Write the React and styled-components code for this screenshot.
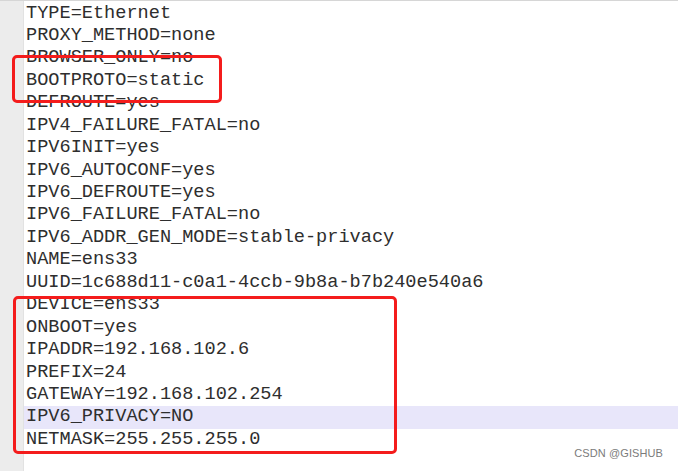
import React from "react";
import styled, { createGlobalStyle } from "styled-components";

const Global = createGlobalStyle`
  html, body { margin: 0; padding: 0; background: #ffffff; }
  body { width: 678px; height: 471px; overflow: hidden; }
`;

const Screen = styled.div`
  position: relative;
  width: 678px;
  height: 471px;
  display: flex;
  background: #ffffff;
  border-top: 1px solid #d6d6d6;
  box-sizing: border-box;
  overflow: hidden;
`;

const Gutter = styled.div`
  width: 23px;
  flex: none;
  background: #ececec;
  border-right: 1px solid #e2e2e2;
`;

const Editor = styled.div`
  flex: 1;
  display: flex;
  flex-direction: column;
  padding-top: 1.5px;
`;

const Line = styled.div`
  height: 22.45px;
  line-height: 22.45px;
  padding-left: 2px;
  font-family: "Courier New", "Liberation Mono", monospace;
  font-size: 18.6px;
  color: #2e2e2e;
  white-space: pre;
  background: ${(p) => (p.$active ? "#e8e6fa" : "transparent")};
`;

const Mark = styled.div`
  position: absolute;
  left: ${(p) => p.$x}px;
  top: ${(p) => p.$y}px;
  width: ${(p) => p.$w}px;
  height: ${(p) => p.$h}px;
  border: 3px solid #f41c1c;
  border-radius: 5px;
  box-sizing: border-box;
  pointer-events: none;
`;

const Watermark = styled.div`
  position: absolute;
  right: 15px;
  bottom: 12px;
  font-family: "Liberation Sans", Arial, sans-serif;
  font-size: 11px;
  color: #7b7b7b;
  letter-spacing: 0.1px;
`;

const lines = [
  "TYPE=Ethernet",
  "PROXY_METHOD=none",
  "BROWSER_ONLY=no",
  "BOOTPROTO=static",
  "DEFROUTE=yes",
  "IPV4_FAILURE_FATAL=no",
  "IPV6INIT=yes",
  "IPV6_AUTOCONF=yes",
  "IPV6_DEFROUTE=yes",
  "IPV6_FAILURE_FATAL=no",
  "IPV6_ADDR_GEN_MODE=stable-privacy",
  "NAME=ens33",
  "UUID=1c688d11-c0a1-4ccb-9b8a-b7b240e540a6",
  "DEVICE=ens33",
  "ONBOOT=yes",
  "IPADDR=192.168.102.6",
  "PREFIX=24",
  "GATEWAY=192.168.102.254",
  "IPV6_PRIVACY=NO",
  "NETMASK=255.255.255.0",
];

export default function App() {
  return (
    <>
      <Global />
      <Screen>
        <Gutter />
        <Editor>
          {lines.map((l, i) => (
            <Line key={i} $active={l === "IPV6_PRIVACY=NO"}>
              {l}
            </Line>
          ))}
        </Editor>
        <Mark $x={12} $y={54} $w={210} $h={48} />
        <Mark $x={13} $y={295} $w={384} $h={158} />
        <Watermark>CSDN @GISHUB</Watermark>
      </Screen>
    </>
  );
}
